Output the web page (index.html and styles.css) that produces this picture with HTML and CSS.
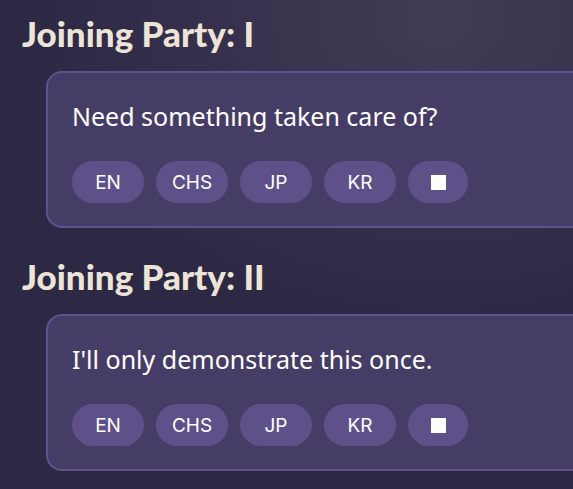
FILE: index.html
```html
<!DOCTYPE html>
<html lang="en">
<head>
  <meta charset="UTF-8" />
  <meta name="viewport" content="width=device-width, initial-scale=1.0"/>
  <title>Joining Party</title>
  <link rel="stylesheet" href="styles.css">
</head>
<body>

  <!-- LINEA I -->
  <div class="linea">
    <h2>Joining Party: I</h2>
    <div class="tarjeta">
      <p class="frase">Need something taken care of?</p>
      <div class="idiomas">
        <button>EN</button>
        <button>CHS</button>
        <button>JP</button>
        <button>KR</button>
        <button class="parar"><span class="cuadro"></span></button>
      </div>
    </div>
  </div>

  <!-- LINEA II -->
  <div class="linea">
    <h2>Joining Party: II</h2>
    <div class="tarjeta">
      <p class="frase">I'll only demonstrate this once.</p>
      <div class="idiomas">
        <button>EN</button>
        <button>CHS</button>
        <button>JP</button>
        <button>KR</button>
        <button class="parar"><span class="cuadro"></span></button>
      </div>
    </div>
  </div>

</body>
</html>
```

FILE: styles.css
```css
html {
  background: #2d2843;
}

body {
  margin: 0;
  padding: 12px 0 0 22px;
  min-height: 489px;
  box-sizing: border-box;
  overflow: hidden;
  font-family: "Noto Sans", sans-serif;
  background: radial-gradient(ellipse 420px 320px at 440px 20px, #423c56 0%, #36304c 55%, #2d2843 100%);
}

.linea {
  margin-bottom: 27px;
}

h2 {
  font-family: Lato, sans-serif;
  font-weight: 900;
  font-size: 35px;
  line-height: 42px;
  color: #ede4d8;
  margin: 0 0 17px 0;
}

.tarjeta {
  margin-left: 24px;
  width: 600px;
  background-color: #463d66;
  border: 2px solid #5f5290;
  border-radius: 16px;
  padding: 27px 24px 23px;
}

.frase {
  color: #ffffff;
  font-size: 25px;
  line-height: 32px;
  margin: 0 0 29px 0;
}

.idiomas {
  display: flex;
  gap: 12px;
}

button {
  width: 72px;
  height: 42px;
  border: none;
  border-radius: 21px;
  background-color: #5e5189;
  color: #ffffff;
  font-family: Inter, sans-serif;
  font-size: 19px;
  padding: 0;
  cursor: pointer;
}

.parar {
  width: 60px;
  display: flex;
  align-items: center;
  justify-content: center;
}

.cuadro {
  width: 15px;
  height: 15px;
  background: #ffffff;
}
```
